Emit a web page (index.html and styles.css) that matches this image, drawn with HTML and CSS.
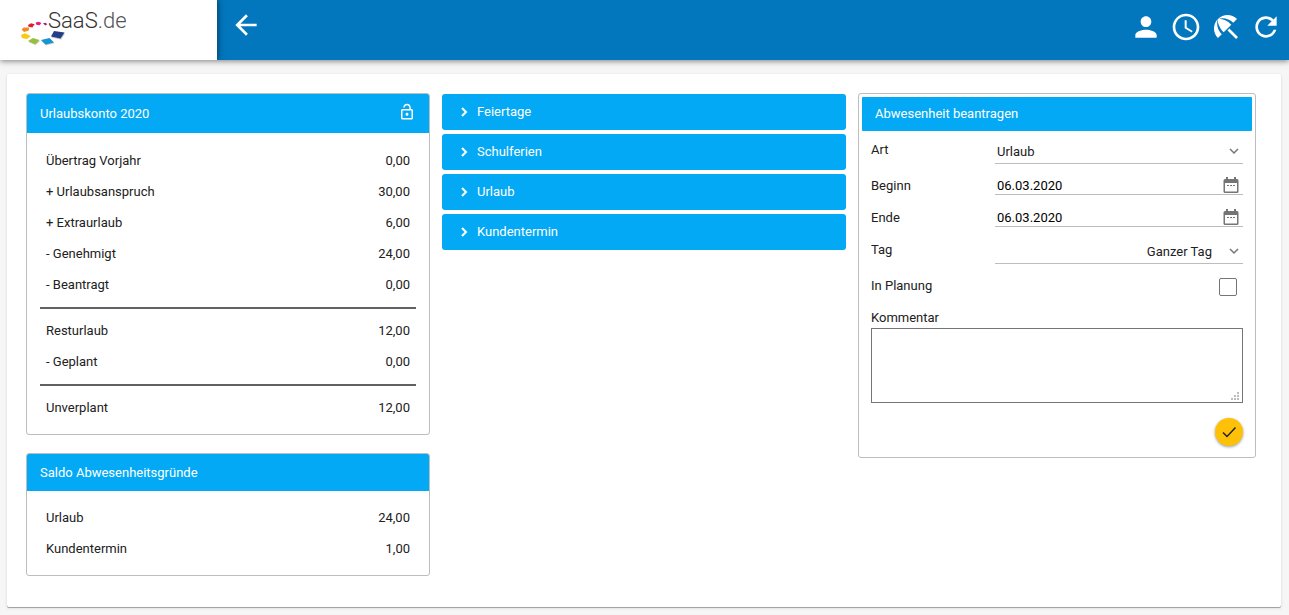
FILE: index.html
```html
<!DOCTYPE html>
<html lang="de">
<head>
<meta charset="utf-8">
<title>Abwesenheiten – SaaS.de</title>
<meta name="viewport" content="width=device-width, initial-scale=1">
<link rel="stylesheet" href="styles.css">
</head>
<body>
<header class="topbar">
  <a class="brand" href="#" aria-label="SaaS.de Startseite">
    <svg class="brand-logo" viewBox="0 0 120 48" aria-hidden="true">
      <g class="brand-shadow">
        <path d="M34.500 32.500 45 33.500 41 39.500 31.500 37.500z"/>
        <path d="M21.500 41 30 39 34.500 43 26 45.500z"/>
        <path d="M8.500 42 13.500 39 20 41 15.500 45z"/>
      </g>
      <path fill="#233f87" d="M34 31 44.500 32.500 40.500 38.500 31 36.500z"/>
      <path fill="#1893d3" d="M21 40 29.500 38 34 42.500 25.500 44.500z"/>
      <path fill="#93c13d" d="M8 41 13 38 19.500 40 15 44.200z"/>
      <path fill="#fbc90d" d="M1 35 5 33.300 10.700 36 7 39 2 38z"/>
      <path fill="#f28a24" d="M1.700 29.500 3.500 27.500 9.200 27.500 8.700 30.500 4 32z"/>
      <path fill="#d8232a" d="M8 25 11 23.300 14.700 24.200 12.300 27.400 8.500 26.800z"/>
      <path fill="#e01f7f" d="M15.700 22.500 18.500 21.700 21.500 23 19.500 25.200 16.300 24.800z"/>
      <path fill="#9c2179" d="M23 23.200 25.500 22.700 27.300 24.200 25.300 25.500z"/>
      <text class="brand-name" x="28" y="28">SaaS<tspan class="brand-tld">.de</tspan></text>
    </svg>
  </a>
  <button class="icon-button back" type="button" aria-label="Zurück">
    <svg viewBox="0 0 24 24"><path d="M20 11H7.830l5.590-5.590L12 4l-8 8 8 8 1.410-1.410L7.830 13H20v-2z"/></svg>
  </button>
  <nav class="actions" aria-label="Hauptmenü">
    <button class="icon-button" type="button" aria-label="Profil">
      <svg viewBox="0 0 24 24"><path d="M12 12c2.210 0 4-1.790 4-4s-1.790-4-4-4-4 1.790-4 4 1.790 4 4 4zm0 2c-2.670 0-8 1.340-8 4v2h16v-2c0-2.660-5.330-4-8-4z"/></svg>
    </button>
    <button class="icon-button" type="button" aria-label="Zeiten">
      <svg viewBox="0 0 24 24"><path d="M11.990 2C6.470 2 2 6.480 2 12s4.470 10 9.990 10C17.520 22 22 17.520 22 12S17.520 2 11.990 2zM12 20c-4.420 0-8-3.580-8-8s3.580-8 8-8 8 3.580 8 8-3.580 8-8 8zM12.500 7H11v6l5.250 3.150.75-1.230-4.500-2.670z"/></svg>
    </button>
    <button class="icon-button" type="button" aria-label="Abwesenheiten">
      <svg viewBox="0 0 24 24"><path d="M13.127 14.560l1.430-1.430 6.440 6.443L19.570 21zM17.420 8.830l2.860-2.860c-3.950-3.950-10.350-3.960-14.300-.020 3.930-1.300 8.310-.250 11.440 2.880zM5.950 5.980c-3.940 3.950-3.930 10.350.020 14.300l2.860-2.860C5.700 14.290 4.650 9.910 5.950 5.980zM5.970 5.960l-.010.010c-.380 3.010 1.170 6.880 4.300 10.020l5.730-5.730c-3.130-3.130-7.010-4.680-10.020-4.300z"/></svg>
    </button>
    <button class="icon-button" type="button" aria-label="Aktualisieren">
      <svg viewBox="0 0 24 24"><path d="M17.650 6.350C16.200 4.900 14.210 4 12 4c-4.420 0-7.990 3.580-7.990 8s3.570 8 7.990 8c3.730 0 6.840-2.550 7.730-6h-2.080c-.820 2.330-3.040 4-5.650 4-3.310 0-6-2.690-6-6s2.690-6 6-6c1.660 0 3.140.690 4.220 1.780L13 11h7V4l-2.350 2.350z"/></svg>
    </button>
  </nav>
</header>

<main class="panel">
  <div class="column balances">
    <section class="card">
      <h2 class="card-title">Urlaubskonto 2020
        <button class="lock" type="button" aria-label="Sperren">
          <svg viewBox="0 0 24 24"><path d="M12 17c1.100 0 2-.9 2-2s-.9-2-2-2-2 .9-2 2 .9 2 2 2zm6-9h-1V6c0-2.760-2.240-5-5-5S7 3.240 7 6h1.900c0-1.710 1.390-3.100 3.100-3.100s3.100 1.390 3.100 3.100v2H6c-1.100 0-2 .9-2 2v10c0 1.100.9 2 2 2h12c1.100 0 2-.9 2-2V10c0-1.100-.9-2-2-2zm0 12H6V10h12v10z"/></svg>
        </button>
      </h2>
      <table class="account with-totals">
        <tbody>
          <tr><th scope="row">Übertrag Vorjahr</th><td>0,00</td></tr>
          <tr><th scope="row">+ Urlaubsanspruch</th><td>30,00</td></tr>
          <tr><th scope="row">+ Extraurlaub</th><td>6,00</td></tr>
          <tr><th scope="row">- Genehmigt</th><td>24,00</td></tr>
          <tr><th scope="row">- Beantragt</th><td>0,00</td></tr>
        </tbody>
        <tbody>
          <tr><th scope="row">Resturlaub</th><td>12,00</td></tr>
          <tr><th scope="row">- Geplant</th><td>0,00</td></tr>
        </tbody>
        <tbody>
          <tr><th scope="row">Unverplant</th><td>12,00</td></tr>
        </tbody>
      </table>
    </section>
    <section class="card">
      <h2 class="card-title">Saldo Abwesenheitsgründe</h2>
      <table class="account">
        <tbody>
          <tr><th scope="row">Urlaub</th><td>24,00</td></tr>
          <tr><th scope="row">Kundentermin</th><td>1,00</td></tr>
        </tbody>
      </table>
    </section>
  </div>

  <div class="column groups">
    <button class="group" type="button" aria-expanded="false"><svg viewBox="0 0 8 10"><path d="M2 1l4 4-4 4"/></svg>Feiertage</button>
    <button class="group" type="button" aria-expanded="false"><svg viewBox="0 0 8 10"><path d="M2 1l4 4-4 4"/></svg>Schulferien</button>
    <button class="group" type="button" aria-expanded="false"><svg viewBox="0 0 8 10"><path d="M2 1l4 4-4 4"/></svg>Urlaub</button>
    <button class="group" type="button" aria-expanded="false"><svg viewBox="0 0 8 10"><path d="M2 1l4 4-4 4"/></svg>Kundentermin</button>
  </div>

  <section class="card request">
    <h2 class="request-title">Abwesenheit beantragen</h2>
    <form class="request-form">
      <div class="row">
        <label for="art">Art</label>
        <div class="field">
          <select id="art"><option>Urlaub</option></select>
          <svg class="chevron" viewBox="0 0 10 8"><path d="M1 2l4 4 4-4"/></svg>
        </div>
      </div>
      <div class="row">
        <label for="beginn">Beginn</label>
        <div class="field date">
          <input id="beginn" type="text" value="06.03.2020">
          <button class="calendar" type="button" aria-label="Beginn wählen">
            <svg viewBox="0 0 16 18"><path d="M3 1h2v2h6V1h2v2h1q1.500 0 1.500 1.500v11q0 1.500-1.500 1.500H2q-1.500 0-1.500-1.500v-11Q.5 3 2 3h1zM2 7v8.500h12V7zM4 9h2v1H4zm3 0h2v1H7zm3 0h2v1h-2z"/></svg>
          </button>
        </div>
      </div>
      <div class="row">
        <label for="ende">Ende</label>
        <div class="field date">
          <input id="ende" type="text" value="06.03.2020">
          <button class="calendar" type="button" aria-label="Ende wählen">
            <svg viewBox="0 0 16 18"><path d="M3 1h2v2h6V1h2v2h1q1.500 0 1.500 1.500v11q0 1.500-1.500 1.500H2q-1.500 0-1.500-1.500v-11Q.5 3 2 3h1zM2 7v8.500h12V7zM4 9h2v1H4zm3 0h2v1H7zm3 0h2v1h-2z"/></svg>
          </button>
        </div>
      </div>
      <div class="row">
        <label for="tag">Tag</label>
        <div class="field">
          <select id="tag" class="align-right"><option>Ganzer Tag</option></select>
          <svg class="chevron" viewBox="0 0 10 8"><path d="M1 2l4 4 4-4"/></svg>
        </div>
      </div>
      <div class="row check-row">
        <label for="planung">In Planung</label>
        <input id="planung" class="check" type="checkbox">
      </div>
      <div class="comment">
        <label for="kommentar">Kommentar</label>
        <textarea id="kommentar"></textarea>
        <svg class="grip" viewBox="0 0 8 8" aria-hidden="true"><path d="M6 0h2v2H6zM3 3h2v2H3zM6 3h2v2H6zM0 6h2v2H0zM3 6h2v2H3zM6 6h2v2H6z"/></svg>
      </div>
      <button class="submit" type="submit" aria-label="Beantragen">
        <svg viewBox="0 0 16 16"><path d="M2 8.500l4 4L14.500 3.500"/></svg>
      </button>
    </form>
  </section>
</main>
</body>
</html>
```

FILE: styles.css
```css
:root {
  --bar: #0277bd;
  --accent: #03a9f4;
  --line: #bdbdbd;
  --text: #212121;
}

* {
  box-sizing: border-box;
}

body {
  margin: 0;
  min-height: 100vh;
  display: flex;
  flex-direction: column;
  background: #f6f6f6;
  color: var(--text);
  font-family: Roboto, "Liberation Sans", sans-serif;
  font-size: 13px;
  line-height: 20px;
}

button,
input,
select,
textarea {
  margin: 0;
  padding: 0;
  border: 0;
  border-radius: 0;
  background: none;
  color: inherit;
  font: inherit;
}

svg {
  display: block;
}

h2 {
  margin: 0;
  font-size: 13px;
  font-weight: 400;
}

/* Top bar */
.topbar {
  display: flex;
  height: 60px;
  background: var(--bar);
  box-shadow: 0 1px 6px rgba(0, 0, 0, 0.5);
}

.brand {
  width: 217px;
  padding-left: 20px;
  background: #fff;
  box-shadow: 1px 0 6px rgba(0, 0, 0, 0.5);
  clip-path: inset(0 -12px 0 0);
}

.brand-logo {
  width: 120px;
  height: 48px;
}

.brand-name {
  fill: #333;
  font-family: Roboto, sans-serif;
  font-size: 22px;
  font-weight: 300;
}

.brand-tld {
  fill: #555;
}

.brand-shadow {
  fill: #c4c4c4;
}

.icon-button {
  width: 32px;
  height: 32px;
}

.icon-button svg {
  width: 32px;
  height: 32px;
  fill: #fff;
}

.back {
  margin: 9px 0 0 13px;
}

.actions {
  display: flex;
  gap: 8px;
  margin-left: auto;
  padding: 11px 7px 0 0;
}

/* Content panel */
.panel {
  flex: 1;
  display: grid;
  grid-template-columns: repeat(3, minmax(0, 1fr));
  gap: 12px;
  align-items: start;
  margin: 14px 8px 8px 7px;
  padding: 19px 19px 31px;
  background: #fff;
  border-radius: 2px;
  box-shadow: 0 1px 0 #a4a4a4, 0 1px 3px rgba(0, 0, 0, 0.15);
}

.card {
  border: 1px solid var(--line);
  border-radius: 3px;
}

.balances {
  display: grid;
  gap: 18px;
}

.card-title {
  display: flex;
  align-items: center;
  justify-content: space-between;
  padding: 9px 13px 8px;
  background: var(--accent);
  border-radius: 2px 2px 0 0;
  color: #fff;
}

.lock {
  height: 22px;
}

.lock svg {
  width: 18px;
  height: 18px;
  margin-bottom: 4px;
  fill: #fff;
}

.account {
  width: calc(100% - 26px);
  margin: 11px 13px;
  border-spacing: 0;
}

.with-totals {
  margin-top: 12px;
}

.account th,
.account td {
  padding: 0 6px;
  font-weight: 400;
  line-height: 31px;
  text-align: left;
}

.account td {
  text-align: right;
}

.account tbody:not(:last-child) tr:last-child > * {
  padding-bottom: 7px;
  border-bottom: 2px solid #616161;
}

.account tbody + tbody tr:first-child > * {
  padding-top: 6px;
}

/* Collapsible groups */
.groups {
  display: grid;
  gap: 4px;
  padding-top: 1px;
}

.group {
  display: flex;
  align-items: center;
  gap: 9px;
  height: 36px;
  padding: 0 18px;
  background: var(--accent);
  border-radius: 3px;
  color: #fff;
}

.group svg {
  width: 8px;
  height: 10px;
  fill: none;
  stroke: #fff;
  stroke-width: 2;
}

/* Request form */
.request {
  margin-right: 6px;
  padding: 3px;
}

.request-title {
  padding: 7px 13px;
  background: var(--accent);
  border-radius: 1px;
  color: #fff;
}

.request-form {
  display: grid;
  gap: 12px;
  padding: 9px 9px 8px;
}

.row {
  display: grid;
  grid-template-columns: 1fr 2fr;
  align-items: start;
}

.field {
  position: relative;
  display: flex;
  height: 24px;
  border-bottom: 1px solid var(--line);
}

.field select {
  width: 100%;
  padding: 0 31px 0 2px;
  appearance: none;
}

.field .align-right {
  text-align-last: right;
}

.chevron {
  position: absolute;
  top: 7px;
  right: 4px;
  width: 10px;
  height: 8px;
  fill: none;
  stroke: #757575;
  stroke-width: 1.5;
  pointer-events: none;
}

.date {
  height: 19px;
  padding-right: 4px;
}

.date input {
  flex: 1;
  min-width: 0;
  padding: 2px 0 0 2px;
  color: #000;
}

.calendar {
  height: 18px;
}

.calendar svg {
  width: 16px;
  height: 18px;
  fill: #757575;
  fill-rule: evenodd;
}

.check-row {
  grid-template-columns: 1fr auto;
  align-items: end;
}

.check {
  width: 18px;
  height: 18px;
  margin-right: 6px;
  border: 1px solid #757575;
  border-radius: 2px;
  appearance: none;
}

.check:checked {
  background: var(--accent);
}

.comment {
  position: relative;
  display: grid;
}

.comment textarea {
  height: 75px;
  padding: 4px;
  border: 1px solid #757575;
  resize: none;
}

.grip {
  position: absolute;
  right: 4px;
  bottom: 3px;
  width: 8px;
  height: 8px;
  fill: #bdbdbd;
  pointer-events: none;
}

.submit {
  display: grid;
  place-items: center;
  justify-self: end;
  width: 28px;
  height: 28px;
  margin-top: 3px;
  border-radius: 50%;
  background: #ffc107;
  box-shadow: 0 1px 3px rgba(0, 0, 0, 0.4);
}

.submit svg {
  width: 16px;
  height: 16px;
  fill: none;
  stroke: #212121;
  stroke-width: 1.5;
}

@media (max-width: 800px) {
  .panel {
    grid-template-columns: minmax(0, 1fr);
  }
}
```
